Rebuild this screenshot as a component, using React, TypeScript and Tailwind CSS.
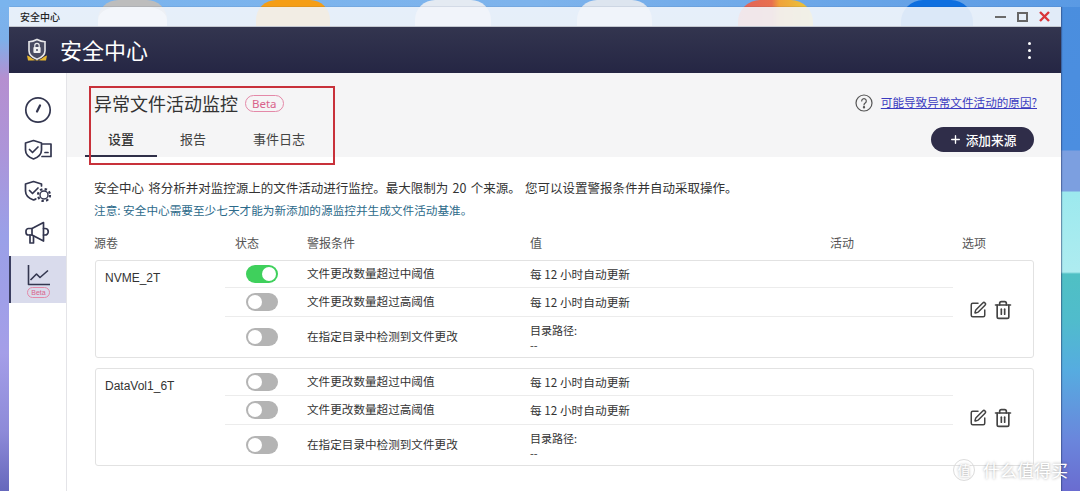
import { SquarePen, Trash2, Plus } from "lucide-react";

const F = { fontFamily: '"Noto Sans CJK SC", "Noto Sans", sans-serif' };

function Toggle({ on }: { on?: boolean }) {
  return (
    <div className={on ? "w-8 h-[18px] rounded-full bg-[#3fd05c] flex items-center justify-end pr-[2px]" : "w-8 h-[18px] rounded-full bg-[#b4b4b4] flex items-center pl-[2px]"}>
      <div className="w-[14px] h-[14px] rounded-full bg-white" />
    </div>
  );
}

function Row({ on, cond, val, h, last }: { on?: boolean; cond: string; val?: string; h: string; last?: boolean }) {
  return (
    <div className={`flex items-center pl-[21px] ${h} ${last ? "" : "border-b border-[#ececec]"}`}>
      <div className="w-[61px] shrink-0"><Toggle on={on} /></div>
      <div className="w-[223px] shrink-0 text-[11.6px] text-[#333]">{cond}</div>
      {val ? (
        <div className="text-[11.7px] text-[#333]">{val}</div>
      ) : (
        <div className="text-[11px] leading-[15px] text-[#333] pt-[2px]">
          <div>目录路径:</div>
          <div>--</div>
        </div>
      )}
    </div>
  );
}

function Card({ name, on }: { name: string; on?: boolean }) {
  return (
    <div className="h-[98px] ml-[28px] mr-[27px] border border-[#e2e2e2] rounded-[3px] flex bg-white">
      <div className="w-[129px] shrink-0 pl-[9px] pt-[8px] text-[12px] text-[#333]" style={{ fontFamily: '"Liberation Sans", sans-serif' }}>{name}</div>
      <div className="w-[728px] shrink-0 flex flex-col">
        <Row h="h-[27px]" on={on} cond="文件更改数量超过中阈值" val="每 12 小时自动更新" />
        <Row h="h-[29px]" cond="文件更改数量超过高阈值" val="每 12 小时自动更新" />
        <Row h="h-[40px]" last cond="在指定目录中检测到文件更改" />
      </div>
      <div className="flex items-center gap-[6px] pl-[16px] pt-[2px] text-[#444]">
        <SquarePen size={18} strokeWidth={2} />
        <Trash2 size={20} strokeWidth={2} />
      </div>
    </div>
  );
}

const navStroke = { fill: "none", stroke: "#33364f", strokeWidth: 1.7, strokeLinecap: "round", strokeLinejoin: "round" } as const;

export default function App() {
  return (
    <div className="relative w-[1080px] h-[491px] overflow-hidden bg-[linear-gradient(180deg,#7ab4ee_0%,#7db0ea_8%,#b58fd0_16%,#ad94d8_30%,#9aa0e8_48%,#a49ee8_72%,#8d8ad8_88%,#6668bc_100%)]" style={F}>
      {/* wallpaper on the right of the window */}
      <div className="absolute right-0 top-0 w-[30px] h-full bg-[linear-gradient(180deg,#4a8ede_0px,#4c8ee0_150px,#7c9fe0_151px,#7c9fe0_191px,#9ce9ee_192px,#aeecf0_272px,#4fc0c4_274px,#50bccc_320px,#56ace0_370px,#6a86dc_440px,#6a6cd0_491px)]" />
      {/* top of the wallpaper */}
      <div className="absolute left-0 top-0 w-[1080px] h-[7px] bg-[linear-gradient(90deg,#7ab4ee_0%,#7db3ec_50%,#5a9ae4_100%)]" />

      {/* desktop icons behind the window */}
      <div className="absolute left-[98px] top-0 w-[69px] h-[70px] rounded-[20px] bg-white border-t-[7px] border-[#bdbdbd]" />
      <div className="absolute left-[256px] top-0 w-[74px] h-[70px] rounded-[20px] bg-[#f59e16]" />
      <div className="absolute left-[415px] top-0 w-[76px] h-[70px] rounded-[20px] bg-[#e4eaf2]" />
      <div className="absolute left-[577px] top-0 w-[75px] h-[70px] rounded-[20px] bg-[#dde5ef]" />
      <div className="absolute left-[738px] top-0 w-[75px] h-[70px] rounded-[22px] bg-[linear-gradient(90deg,#e2635a_0%,#e8704f_45%,#f0a23a_55%,#e8c93a_100%)]" />
      <div className="absolute left-[901px] top-0 w-[72px] h-[70px] rounded-[22px] bg-[#0e6fe0]" />

      <div className="relative mt-[7px] ml-[9px] w-[1052px] h-[484px] flex flex-col shadow-[1px_0_1px_rgba(40,60,110,0.5)]">
        {/* title bar */}
        <div className="h-[20px] shrink-0 bg-[#f2f5fb]/90 flex items-center pl-[11px] pr-[11px] border-b border-[#c4c8d0]">
          <span className="text-[10px] font-medium text-[#222]">安全中心</span>
          <div className="ml-auto flex items-center gap-[11px]">
            <div className="w-[11px] h-[2px] bg-[#6b6b6b]" />
            <div className="w-[11px] h-[10px] border-2 border-[#666]" />
            <svg width="11" height="11" viewBox="0 0 11 11" className="text-[#d9363a]"><path d="M1 1l9 9M10 1l-9 9" stroke="currentColor" strokeWidth="2.4" /></svg>
          </div>
        </div>
        {/* header */}
        <div className="h-[46px] shrink-0 bg-[linear-gradient(180deg,#33354f_0%,#252644_100%)] flex items-center pl-[17px] pr-[30px]">
          <svg width="22" height="24" viewBox="0 0 22 24" className="shrink-0">
            <path d="M11 1.500c3 1.600 5.600 2.200 8 2.200v9c0 4.200-3.400 6.800-8 8.600-4.600-1.800-8-4.400-8-8.600v-9c2.400 0 5-.6 8-2.200z" fill="#4a4c62" stroke="#e8e8ea" strokeWidth="1.600" />
            <rect x="7.400" y="9" width="7.200" height="6" rx="1" fill="#f0f0f0" />
            <path d="M8.800 9V7.600a2.200 2.200 0 0 1 4.400 0V9" fill="none" stroke="#f0f0f0" strokeWidth="1.200" />
            <circle cx="11" cy="12" r="1" fill="#4a4c62" />
            <path d="M1 17.500c3 1 4.500 2.600 6 3.500l4 1.800 4-1.800c1.500-.9 3-2.500 6-3.500l-1 5h-5l-4-.5-4 .5H2z" fill="#e6b62f" />
          </svg>
          <span className="ml-[12px] mb-[2px] text-[22px] text-white">安全中心</span>
          <div className="ml-auto flex flex-col gap-[4px]">
            <div className="w-[3px] h-[3px] rounded-full bg-white" />
            <div className="w-[3px] h-[3px] rounded-full bg-white" />
            <div className="w-[3px] h-[3px] rounded-full bg-white" />
          </div>
        </div>

        <div className="flex-1 flex min-h-0 bg-white">
          {/* sidebar */}
          <div className="w-[58px] shrink-0 border-r border-[#e4e4e8] flex flex-col items-center pt-[23px]">
            <svg width="28" height="28" viewBox="0 0 28 28" {...navStroke}>
              <circle cx="14" cy="14" r="12.200" />
              <path d="M13 15.500l3-6" strokeWidth="2.200" />
            </svg>
            <svg width="28" height="22" viewBox="0 0 28 22" {...navStroke} className="mt-[15px]">
              <path d="M9.500 1.500L17.500 4v7c0 4.500-4 7.500-8 9-4-1.500-8-4.500-8-9V4z" />
              <path d="M5.500 10.500l3 3 5.500-5.500" />
              <path d="M18.500 5h8.500v12.500h-9M21 13.500h3" />
            </svg>
            <svg width="28" height="24" viewBox="0 0 28 24" {...navStroke} className="mt-[19px]">
              <path d="M17.500 6V4L9.500 1.500 1.500 4v7c0 4.500 4 7.500 8 9 .8-.3 1.600-.7 2.300-1.100" />
              <path d="M5.500 10.500l3 3 5.500-5.500" />
              <circle cx="20" cy="15" r="4" strokeWidth="1.400" />
              <circle cx="20" cy="15" r="6" strokeWidth="2.200" strokeDasharray="2.400 2.300" strokeLinecap="butt" />
            </svg>
            <svg width="28" height="24" viewBox="0 0 28 24" {...navStroke} className="mt-[17px]">
              <path d="M19.500 1.500L8 7.500H4.500A2.500 2.500 0 0 0 2 10v1.500A2.500 2.500 0 0 0 4.500 14H8l11.500 6z" />
              <path d="M8 7.500V14M6 14v8h3.500v-7M19.500 7.500H21a3.200 3.200 0 0 1 0 6.500h-1.500" />
            </svg>
            <div className="mt-[11px] w-full h-[47px] bg-[#d9dbec] border-l-2 border-[#3a3d60] flex flex-col items-center pt-[8px]">
              <svg width="24" height="22" viewBox="0 0 24 22" fill="none" stroke="#33364f" strokeWidth="1.600" strokeLinejoin="round" className="shrink-0">
                <path d="M1.500 1v19.500h21.500" />
                <path d="M3.500 16l6-6 3.500 3.500 8-7" />
              </svg>
              <div className="mt-[1px] px-[3px] rounded-full border border-[#e489a8] text-[7px] leading-[9px] text-[#d9628b]" style={{ fontFamily: '"Liberation Sans", sans-serif' }}>Beta</div>
            </div>
          </div>

          {/* main */}
          <div className="relative flex-1 min-w-0">
            <div className="h-[84px] bg-[#f5f5f6] relative">
              <div className="flex items-center pt-[17px] pl-[27px]">
                <span className="text-[18px] leading-[26px] text-[#333]">异常文件活动监控</span>
                <span className="ml-[7px] h-[17px] px-[6px] rounded-full border border-[#e489a8] text-[11.500px] leading-[15px] text-[#d9628b]" style={{ fontFamily: '"Noto Sans", sans-serif' }}>Beta</span>
                <div className="ml-auto mr-[24px] flex items-center">
                  <svg width="18" height="18" viewBox="0 0 18 18" fill="none" stroke="#555" strokeWidth="1.200" className="mr-[8px]">
                    <circle cx="9" cy="9" r="8" />
                    <path d="M6.700 7a2.300 2.300 0 1 1 3.500 2c-.8.5-1.200 1-1.200 2" strokeLinecap="round" />
                    <circle cx="9" cy="13.200" r=".6" fill="#555" />
                  </svg>
                  <a className="text-[11.600px] text-[#3a3ac0] underline">可能导致异常文件活动的原因?</a>
                </div>
              </div>
              <div className="absolute left-[18px] bottom-0 flex text-[13px] text-[#444]">
                <div className="w-[72px] h-[35px] border-b-2 border-[#2f2f48] flex items-start justify-center pt-[7px] font-medium text-[#333]">设置</div>
                <div className="w-[72px] h-[35px] flex items-start justify-center pt-[7px]">报告</div>
                <div className="w-[100px] h-[35px] flex items-start justify-center pt-[7px]">事件日志</div>
              </div>
              <div className="absolute right-[27px] top-[54px] w-[103px] h-[25px] rounded-full bg-[#2f2d49] text-white text-[12.700px] font-medium flex items-center justify-center gap-[4px]">
                <Plus size={13} strokeWidth={2.500} />
                添加来源
              </div>
            </div>

            <div className="pt-[22px] pl-[27px] text-[12.500px] leading-[17px] text-[#333] [word-spacing:1.500px]">安全中心 将分析并对监控源上的文件活动进行监控。最大限制为 20 个来源。 您可以设置警报条件并自动采取操作。</div>
            <div className="pt-[6px] pl-[27px] text-[11.650px] leading-[15px] text-[#2c6a8a]">注意: 安全中心需要至少七天才能为新添加的源监控并生成文件活动基准。</div>

            <div className="mt-[17px] h-[18px] flex items-center text-[12px] text-[#555]">
              <div className="pl-[27px] w-[168px]">源卷</div>
              <div className="w-[72px]">状态</div>
              <div className="w-[223px]">警报条件</div>
              <div className="w-[300px]">值</div>
              <div className="w-[132px]">活动</div>
              <div>选项</div>
            </div>

            <div className="mt-[8px] flex flex-col gap-[10px]">
              <Card name="NVME_2T" on />
              <Card name="DataVol1_6T" />
            </div>

            {/* highlight box drawn over the screenshot */}
            <div className="absolute left-[22px] top-[13px] w-[246px] h-[79px] border-2 border-[#c8313a]" />
          </div>
        </div>
      </div>

      {/* watermark */}
      <div className="absolute left-[953px] top-[459px] flex items-center text-white [text-shadow:0_0_3px_rgba(0,0,0,0.4)]">
        <div className="w-[22px] h-[22px] rounded-full border border-[#dcdcdc] flex items-center justify-center text-[13px]">值</div>
        <span className="ml-[8px] text-[17px] leading-[20px]">什么值得买</span>
      </div>
    </div>
  );
}
